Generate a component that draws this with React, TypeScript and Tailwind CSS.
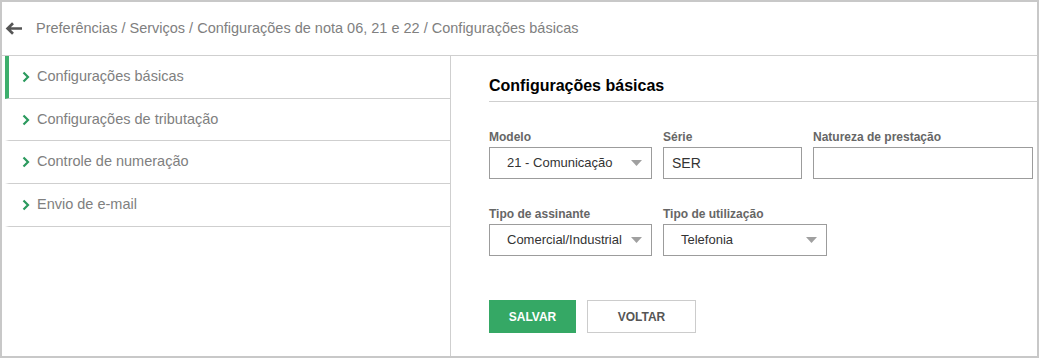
const menu = [
  { label: "Configurações básicas", active: true, h: "h-[43px]" },
  { label: "Configurações de tributação", active: false, h: "h-[42px]" },
  { label: "Controle de numeração", active: false, h: "h-[43px]" },
  { label: "Envio de e-mail", active: false, h: "h-[43px]" },
];

function Chevron() {
  return (
    <svg width="8" height="12" viewBox="0 0 8 12" className="shrink-0">
      <path d="M1.5 1.5 L6 6 L1.5 10.5" fill="none" stroke="#2b9a5e" strokeWidth="2.2" />
    </svg>
  );
}

function Caret() {
  return (
    <svg width="11" height="6" viewBox="0 0 11 6" className="shrink-0">
      <path d="M0 0 H11 L5.5 6 Z" fill="#a0a0a0" />
    </svg>
  );
}

function Field({ label, width, children }: { label: string; width: string; children: React.ReactNode }) {
  return (
    <div className={`flex flex-col ${width}`}>
      <span className="mb-[3px] text-[12px] font-bold leading-[14px] text-[#666]">{label}</span>
      {children}
    </div>
  );
}

function Select({ value }: { value: string }) {
  return (
    <div className="flex h-[32px] items-center justify-between border border-[#9c9c9c] pl-[17px] pr-[9px] text-[13px] text-[#333]">
      <span>{value}</span>
      <Caret />
    </div>
  );
}

function Input({ value }: { value?: string }) {
  return (
    <div className="flex h-[32px] items-center border border-[#9c9c9c] pl-[8px] text-[14px] text-[#333]">
      {value}
    </div>
  );
}

export default function App() {
  return (
    <div className="flex h-[358px] w-[1039px] flex-col border-2 border-[#c8c8c8] bg-white font-['Liberation_Sans',Arial,sans-serif]">
      <header className="flex h-[54px] shrink-0 items-center gap-[13px] border-b border-[#cfcfcf] pl-[3px]">
        <svg width="18" height="13" viewBox="0 0 18 13">
          <path d="M17 6.5 H2.5 M8 1.2 L2.6 6.5 L8 11.8" fill="none" stroke="#555" strokeWidth="2.7" />
        </svg>
        <span className="text-[14.5px] text-[#808080]">
          Preferências / Serviços / Configurações de nota 06, 21 e 22 / Configurações básicas
        </span>
      </header>

      <div className="flex flex-1">
        <nav className="ml-[3px] w-[446px] shrink-0 border-r border-[#cfcfcf]">
          {menu.map((item) => (
            <div
              key={item.label}
              className={`flex ${item.h} items-center gap-[7px] border-b border-l-4 border-b-[#cfcfcf] pl-[13px] text-[14.5px] text-[#808080] ${
                item.active ? "border-l-[#3daf6c]" : "border-l-transparent"
              }`}
            >
              <Chevron />
              <span>{item.label}</span>
            </div>
          ))}
        </nav>

        <main className="flex-1 pl-[38px] pt-[20px]">
          <h1 className="border-b border-[#cfcfcf] pb-[5px] text-[16px] font-bold leading-[20px] text-black">
            Configurações básicas
          </h1>

          <div className="mt-[28px] flex gap-[11px]">
            <Field label="Modelo" width="w-[163px]">
              <Select value="21 - Comunicação" />
            </Field>
            <Field label="Série" width="w-[139px]">
              <Input value="SER" />
            </Field>
            <Field label="Natureza de prestação" width="w-[220px]">
              <Input />
            </Field>
          </div>

          <div className="mt-[28px] flex gap-[11px]">
            <Field label="Tipo de assinante" width="w-[163px]">
              <Select value="Comercial/Industrial" />
            </Field>
            <Field label="Tipo de utilização" width="w-[164px]">
              <Select value="Telefonia" />
            </Field>
          </div>

          <div className="mt-[44px] flex gap-[11px]">
            <button className="h-[33px] w-[87px] bg-[#35a865] text-[12px] font-bold text-white">SALVAR</button>
            <button className="h-[33px] w-[109px] border border-[#cccccc] bg-white text-[12px] font-bold text-[#555]">
              VOLTAR
            </button>
          </div>
        </main>
      </div>
    </div>
  );
}
